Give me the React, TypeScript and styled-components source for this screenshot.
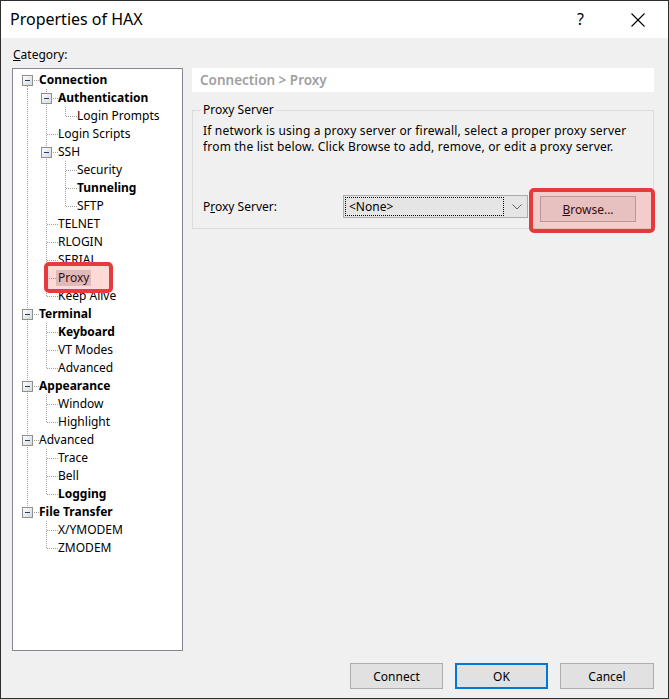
import React from 'react';
import styled, { createGlobalStyle } from 'styled-components';

const GlobalStyle = createGlobalStyle`
    html, body {
        margin: 0;
        padding: 0;
        background: #f0f0f0;
    }
    body {
        font-family: "Noto Sans", "DejaVu Sans", sans-serif;
        font-size: 12px;
        color: #000;
    }
`;

interface TreeNode {
    label: string;
    level: number;
    bold?: boolean;
    box?: boolean;
    selected?: boolean;
    // for each ancestor depth: true when a vertical line runs through this row
    guides: boolean[];
    // connector shape in the own cell
    shape: 'first' | 'mid' | 'last';
}

const ROWS: TreeNode[] = [
    { label: 'Connection', level: 0, bold: true, box: true, guides: [], shape: 'first' },
    { label: 'Authentication', level: 1, bold: true, box: true, guides: [true], shape: 'mid' },
    { label: 'Login Prompts', level: 2, guides: [true, true], shape: 'last' },
    { label: 'Login Scripts', level: 1, guides: [true], shape: 'mid' },
    { label: 'SSH', level: 1, box: true, guides: [true], shape: 'mid' },
    { label: 'Security', level: 2, guides: [true, true], shape: 'mid' },
    { label: 'Tunneling', level: 2, bold: true, guides: [true, true], shape: 'mid' },
    { label: 'SFTP', level: 2, guides: [true, true], shape: 'last' },
    { label: 'TELNET', level: 1, guides: [true], shape: 'mid' },
    { label: 'RLOGIN', level: 1, guides: [true], shape: 'mid' },
    { label: 'SERIAL', level: 1, guides: [true], shape: 'mid' },
    { label: 'Proxy', level: 1, selected: true, guides: [true], shape: 'mid' },
    { label: 'Keep Alive', level: 1, guides: [true], shape: 'last' },
    { label: 'Terminal', level: 0, bold: true, box: true, guides: [], shape: 'mid' },
    { label: 'Keyboard', level: 1, bold: true, guides: [true], shape: 'mid' },
    { label: 'VT Modes', level: 1, guides: [true], shape: 'mid' },
    { label: 'Advanced', level: 1, guides: [true], shape: 'last' },
    { label: 'Appearance', level: 0, bold: true, box: true, guides: [], shape: 'mid' },
    { label: 'Window', level: 1, guides: [true], shape: 'mid' },
    { label: 'Highlight', level: 1, guides: [true], shape: 'last' },
    { label: 'Advanced', level: 0, box: true, guides: [], shape: 'mid' },
    { label: 'Trace', level: 1, guides: [true], shape: 'mid' },
    { label: 'Bell', level: 1, guides: [true], shape: 'mid' },
    { label: 'Logging', level: 1, bold: true, guides: [true], shape: 'last' },
    { label: 'File Transfer', level: 0, bold: true, box: true, guides: [], shape: 'last' },
    { label: 'X/YMODEM', level: 1, guides: [false], shape: 'mid' },
    { label: 'ZMODEM', level: 1, guides: [false], shape: 'last' },
];

const LINE = '#a0a0a0';

const GuideCell: React.FC<{ on: boolean }> = ({ on }) => (
    <Cell>
        {on && (
            <svg width="19" height="18">
                <line x1="7.5" y1="0" x2="7.5" y2="18" stroke={LINE} strokeDasharray="1 1" />
            </svg>
        )}
    </Cell>
);

const ConnectorCell: React.FC<{ shape: 'first' | 'mid' | 'last'; box?: boolean }> = ({ shape, box }) => {
    const y1 = shape === 'first' ? 9 : 0;
    const y2 = shape === 'last' ? 9 : 18;
    return (
        <Cell>
            <svg width="19" height="18">
                <line x1="7.5" y1={y1} x2="7.5" y2={y2} stroke={LINE} strokeDasharray="1 1" />
                <line x1="8" y1="9.5" x2="19" y2="9.5" stroke={LINE} strokeDasharray="1 1" />
                {box && (
                    <g>
                        <defs>
                            <linearGradient id="bx" x1="0" y1="0" x2="1" y2="1">
                                <stop offset="0" stopColor="#ffffff" />
                                <stop offset="1" stopColor="#d6d6d6" />
                            </linearGradient>
                        </defs>
                        <rect x="2.5" y="4.5" width="10" height="10" fill="url(#bx)" stroke="#8e8f8f" />
                        <line x1="5" y1="9.5" x2="10" y2="9.5" stroke="#1f3d8f" />
                    </g>
                )}
            </svg>
        </Cell>
    );
};

const App: React.FC = () => {
    return (
        <>
            <GlobalStyle />
            <Window>
                <TitleBar>
                    <Title>Properties of HAX</Title>
                    <TitleButtons>
                        <HelpMark>?</HelpMark>
                        <CloseIcon width="14" height="14" viewBox="0 0 14 14">
                            <line x1="0.5" y1="0.5" x2="13.5" y2="13.5" stroke="#000" strokeWidth="1.1" />
                            <line x1="13.5" y1="0.5" x2="0.5" y2="13.5" stroke="#000" strokeWidth="1.1" />
                        </CloseIcon>
                    </TitleButtons>
                </TitleBar>

                <Body>
                    <CategoryLabel><u>C</u>ategory:</CategoryLabel>
                    <Main>
                        <TreeBox>
                            {ROWS.map((row, i) => (
                                <TreeRow key={i}>
                                    {row.guides.map((g, j) => (
                                        <GuideCell key={j} on={g} />
                                    ))}
                                    <ConnectorCell shape={row.shape} box={row.box} />
                                    <ItemText bold={row.bold} selected={row.selected}>{row.label}</ItemText>
                                </TreeRow>
                            ))}
                            <Highlight style={{ left: 31, top: 193, width: 69, height: 31 }} />
                        </TreeBox>

                        <Panel>
                            <PanelHeader>Connection &gt; Proxy</PanelHeader>
                            <GroupBox>
                                <Legend>Proxy Server</Legend>
                                <Description>
                                    If network is using a proxy server or firewall, select a proper proxy server
                                    <br />
                                    from the list below. Click Browse to add, remove, or edit a proxy server.
                                </Description>
                                <FieldRow>
                                    <FieldLabel>P<u>r</u>oxy Server:</FieldLabel>
                                    <Select>
                                        <FocusRect>&lt;None&gt;</FocusRect>
                                        <svg width="10" height="6" viewBox="0 0 10 6">
                                            <polyline points="0.5,0.5 5,5 9.5,0.5" fill="none" stroke="#606060" />
                                        </svg>
                                    </Select>
                                    <BrowseWrap>
                                        <Button width={96} height={26}><u>B</u>rowse...</Button>
                                        <Highlight style={{ left: -11, top: -8, width: 126, height: 45 }} />
                                    </BrowseWrap>
                                </FieldRow>
                            </GroupBox>
                        </Panel>
                    </Main>

                    <Footer>
                        <Button width={93} height={26}>Connect</Button>
                        <Button width={93} height={26} primary>OK</Button>
                        <Button width={94} height={26}>Cancel</Button>
                    </Footer>
                </Body>
            </Window>
        </>
    );
};

export default App;

const Window = styled.div`
    width: 669px;
    height: 699px;
    box-sizing: border-box;
    border: 1px solid #2e2e2e;
    display: flex;
    flex-direction: column;
    background: #f0f0f0;
    overflow: hidden;
`;

const TitleBar = styled.div`
    height: 37px;
    background: #fff;
    display: flex;
    align-items: center;
    justify-content: space-between;
    padding: 0 23px 0 9px;
`;

const Title = styled.div`
    font-size: 16px;
    padding-bottom: 2px;
`;

const TitleButtons = styled.div`
    display: flex;
    align-items: center;
    gap: 47px;
`;

const HelpMark = styled.span`
    font-size: 16px;
    padding-bottom: 2px;
`;

const CloseIcon = styled.svg`
    display: block;
`;

const Body = styled.div`
    flex: 1;
    display: flex;
    flex-direction: column;
    padding: 9px 14px 9px 11px;
`;

const CategoryLabel = styled.div`
    line-height: 16px;
    height: 16px;
    margin-bottom: 5px;
    padding-left: 1px;
`;

const Main = styled.div`
    display: flex;
    gap: 9px;
    height: 583px;
`;

const TreeBox = styled.div`
    position: relative;
    width: 171px;
    box-sizing: border-box;
    border: 1px solid #828790;
    background: #fff;
    padding: 2px 0 0 7px;
`;

const TreeRow = styled.div`
    display: flex;
    align-items: center;
    height: 18px;
    white-space: nowrap;
`;

const Cell = styled.div`
    width: 19px;
    height: 18px;
    flex: none;
    svg { display: block; }
`;

const ItemText = styled.span<{ bold?: boolean; selected?: boolean }>`
    font-weight: ${({ bold }) => (bold ? 700 : 400)};
    line-height: 16px;
    padding: 0 2px;
    margin-left: -2px;
    background: ${({ selected }) => (selected ? '#d9d9d9' : 'transparent')};
`;

const Highlight = styled.div`
    position: absolute;
    box-sizing: border-box;
    border: 4px solid #e8393b;
    border-radius: 5px;
    background: rgba(255, 60, 60, 0.2);
    pointer-events: none;
`;

const Panel = styled.div`
    flex: 1;
    display: flex;
    flex-direction: column;
`;

const PanelHeader = styled.div`
    height: 24px;
    line-height: 24px;
    background: #fff;
    color: #a0a0a0;
    font-size: 13.5px;
    font-weight: 600;
    padding-left: 8px;
`;

const GroupBox = styled.fieldset`
    margin: 10px 0 0;
    padding: 3px 10px 6px;
    border: 1px solid #dcdcdc;
    min-width: 0;
`;

const Legend = styled.legend`
    padding: 0 2px;
    margin-left: -2px;
    line-height: 16px;
`;

const Description = styled.div`
    line-height: 16px;
    letter-spacing: 0.18px;
    margin-top: 2px;
`;

const FieldRow = styled.div`
    display: flex;
    align-items: flex-start;
    margin-top: 40px;
`;

const FieldLabel = styled.div`
    width: 140px;
    line-height: 23px;
`;

const Select = styled.div`
    width: 185px;
    height: 23px;
    box-sizing: border-box;
    border: 1px solid #acacac;
    background: #e5e5e5;
    display: flex;
    align-items: center;
    padding: 1px 5px 1px 1px;
    gap: 8px;
`;

const FocusRect = styled.div`
    flex: 1;
    height: 19px;
    box-sizing: border-box;
    border: 1px dotted #000;
    line-height: 17px;
    padding-left: 3px;
`;

const BrowseWrap = styled.div`
    position: relative;
    margin-left: 12px;
    margin-top: 1px;
`;

const Button = styled.div<{ width: number; height: number; primary?: boolean }>`
    width: ${({ width }) => width}px;
    height: ${({ height }) => height}px;
    box-sizing: border-box;
    background: #e1e1e1;
    border: ${({ primary }) => (primary ? '2px solid #0078d7' : '1px solid #adadad')};
    display: flex;
    align-items: center;
    justify-content: center;
`;

const Footer = styled.div`
    display: flex;
    justify-content: flex-end;
    gap: 12px;
    margin-top: 12px;
`;
